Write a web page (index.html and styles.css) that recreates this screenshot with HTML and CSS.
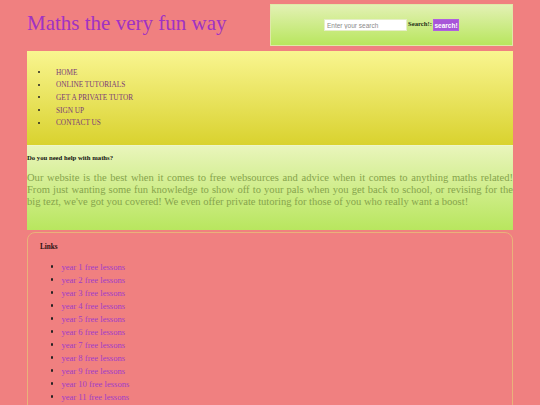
FILE: index.html
```html
<!DOCTYPE html>
<html>
<head>
<meta charset="utf-8">
<title>Maths the very fun way</title>
<link rel="stylesheet" href="styles.css">
</head>
<body>
<div class="page">
  <header class="header">
    <h1 class="title">Maths the very fun way</h1>
    <div class="search">
      <input class="search-input" type="text" placeholder="Enter your search">
      <span class="search-label">Search!:</span>
      <button class="search-btn">search!</button>
    </div>
  </header>
  <nav class="nav">
    <ul class="nav-list">
      <li>HOME</li>
      <li>ONLINE TUTORIALS</li>
      <li>GET A PRIVATE TUTOR</li>
      <li>SIGN UP</li>
      <li>CONTACT US</li>
    </ul>
  </nav>
  <section class="intro">
    <h4 class="intro-title">Do you need help with maths?</h4>
    <p class="intro-text">Our website is the best when it comes to free websources and advice when it comes to anything maths related! From just wanting some fun knowledge to show off to your pals when you get back to school, or revising for the big tezt, we've got you covered! We even offer private tutoring for those of you who really want a boost!</p>
  </section>
  <section class="links">
    <h4 class="links-title">Links</h4>
    <ul class="links-list">
      <li>year 1 free lessons</li>
      <li>year 2 free lessons</li>
      <li>year 3 free lessons</li>
      <li>year 4 free lessons</li>
      <li>year 5 free lessons</li>
      <li>year 6 free lessons</li>
      <li>year 7 free lessons</li>
      <li>year 8 free lessons</li>
      <li>year 9 free lessons</li>
      <li>year 10 free lessons</li>
      <li>year 11 free lessons</li>
    </ul>
  </section>
</div>
</body>
</html>
```
FILE: styles.css
```css
* { box-sizing: border-box; }
html, body { margin: 0; padding: 0; }
body {
  background: #f08080;
  font-family: "Liberation Serif", "Times New Roman", serif;
  overflow: hidden;
}
.page {
  width: 486px;
  margin: 0 auto;
}
.header {
  display: flex;
  height: 46px;
}
.title {
  width: 243px;
  margin: 0;
  padding-top: 10px;
  font-size: 21px;
  font-weight: normal;
  line-height: 26px;
  color: #a032c4;
}
.search {
  width: 243px;
  margin-top: 4px;
  height: 42px;
  border: 1px solid #dfe9a8;
  background: linear-gradient(#e3f1b4, #b8e65e);
  display: flex;
  align-items: center;
  justify-content: center;
}
.search-input {
  width: 83px;
  height: 12px;
  margin: 0;
  padding: 0 2px;
  border: 1px solid #e6eec8;
  background: #fff;
  font-family: "Liberation Sans", Arial, sans-serif;
  font-size: 6.5px;
  color: #777;
}
.search-input::placeholder { color: #8a8a8a; }
.search-label {
  font-size: 6.7px;
  font-weight: bold;
  color: #253018;
  margin-left: 1px;
  margin-right: 1px;
  align-self: center;
  margin-top: -4px;
}
.search-btn {
  width: 26px;
  height: 12px;
  margin: 0;
  padding: 0;
  border: 1px solid #b060e0;
  background: #a855d8;
  color: #fff;
  font-family: "Liberation Sans", Arial, sans-serif;
  font-size: 6.5px;
  font-weight: bold;
}
.nav {
  margin-top: 5px;
  height: 94px;
  background: linear-gradient(#f9f590, #d9d22e);
  padding-top: 15px;
}
.nav-list {
  list-style: none;
  margin: 0;
  padding: 0 0 0 11px;
}
.nav-list li {
  display: flex;
  align-items: center;
  height: 12.6px;
  font-size: 7.3px;
  color: #7a3a78;
}
.nav-list li::before {
  content: "";
  width: 2px;
  height: 2px;
  background: #222;
  border-radius: 50%;
  margin-right: 16px;
}
.intro {
  height: 85px;
  background: linear-gradient(#e9f5bb, #b8e65e);
  border-top: 1px solid #eef6c8;
  padding-top: 7px;
}
.intro-title {
  margin: 0;
  font-size: 6.7px;
  line-height: 9px;
  font-weight: bold;
  color: #111;
}
.intro-text {
  margin: 10px 0 0 0;
  font-size: 10.55px;
  line-height: 12px;
  text-align: justify;
  color: #86a44c;
}
.links {
  margin-top: 2px;
  border: 1px solid #e9b27a;
  border-radius: 8px;
  padding: 9px 0 30px 12px;
}
.links-title {
  margin: 0;
  font-size: 7.2px;
  line-height: 10px;
  font-weight: bold;
  color: #2a1010;
}
.links-list {
  list-style: none;
  margin: 8px 0 0 0;
  padding: 0 0 0 11px;
}
.links-list li {
  display: flex;
  align-items: center;
  height: 13px;
  font-size: 8.6px;
  color: #a03cc8;
}
.links-list li::before {
  content: "";
  width: 2.4px;
  height: 2.4px;
  background: #222;
  border-radius: 50%;
  margin-right: 8px;
}
```
